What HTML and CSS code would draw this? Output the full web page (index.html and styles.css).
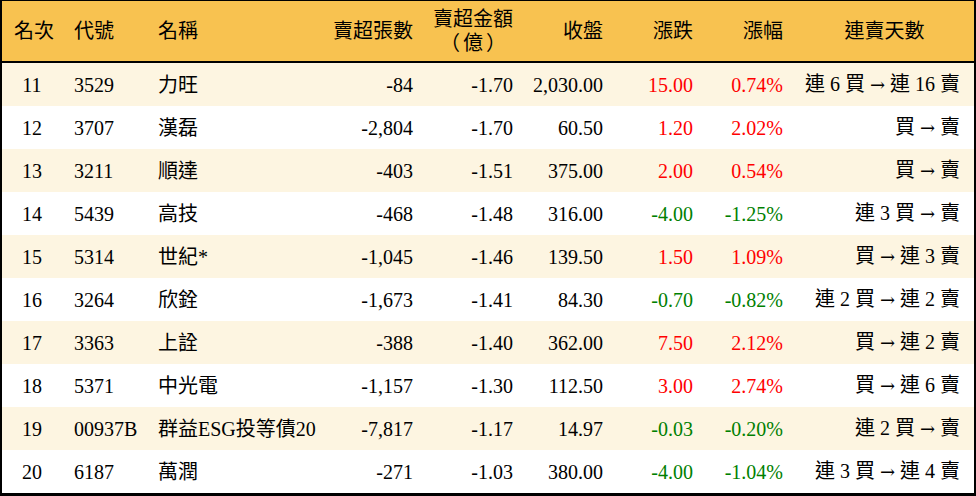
FILE: index.html
```html
<!DOCTYPE html>
<html lang="zh-Hant">
<head>
<meta charset="utf-8">
<link rel="stylesheet" href="styles.css">
</head>
<body>
<div class="frame">
<table class="rank">
<colgroup>
<col class="c1"><col class="c2"><col class="c3"><col class="c4"><col class="c5"><col class="c6"><col class="c7"><col class="c8"><col class="c9">
</colgroup>
<thead>
<tr>
<th class="ctr">名次</th>
<th class="lft">代號</th>
<th class="lft">名稱</th>
<th class="rgt">賣超張數</th>
<th class="rgt"><span class="two"><span>賣超金額</span><span class="paren">（億）</span></span></th>
<th class="rgt">收盤</th>
<th class="rgt">漲跌</th>
<th class="rgt">漲幅</th>
<th class="ctr">連賣天數</th>
</tr>
</thead>
<tbody>
<tr class="alt"><td class="ctr">11</td><td>3529</td><td>力旺</td><td class="rgt">-84</td><td class="rgt">-1.70</td><td class="rgt">2,030.00</td><td class="rgt up">15.00</td><td class="rgt up">0.74%</td><td class="rgt last">連 6 買 <span class="arr">→</span> 連 16 賣</td></tr>
<tr><td class="ctr">12</td><td>3707</td><td>漢磊</td><td class="rgt">-2,804</td><td class="rgt">-1.70</td><td class="rgt">60.50</td><td class="rgt up">1.20</td><td class="rgt up">2.02%</td><td class="rgt last">買 <span class="arr">→</span> 賣</td></tr>
<tr class="alt"><td class="ctr">13</td><td>3211</td><td>順達</td><td class="rgt">-403</td><td class="rgt">-1.51</td><td class="rgt">375.00</td><td class="rgt up">2.00</td><td class="rgt up">0.54%</td><td class="rgt last">買 <span class="arr">→</span> 賣</td></tr>
<tr><td class="ctr">14</td><td>5439</td><td>高技</td><td class="rgt">-468</td><td class="rgt">-1.48</td><td class="rgt">316.00</td><td class="rgt dn">-4.00</td><td class="rgt dn">-1.25%</td><td class="rgt last">連 3 買 <span class="arr">→</span> 賣</td></tr>
<tr class="alt"><td class="ctr">15</td><td>5314</td><td>世紀*</td><td class="rgt">-1,045</td><td class="rgt">-1.46</td><td class="rgt">139.50</td><td class="rgt up">1.50</td><td class="rgt up">1.09%</td><td class="rgt last">買 <span class="arr">→</span> 連 3 賣</td></tr>
<tr><td class="ctr">16</td><td>3264</td><td>欣銓</td><td class="rgt">-1,673</td><td class="rgt">-1.41</td><td class="rgt">84.30</td><td class="rgt dn">-0.70</td><td class="rgt dn">-0.82%</td><td class="rgt last">連 2 買 <span class="arr">→</span> 連 2 賣</td></tr>
<tr class="alt"><td class="ctr">17</td><td>3363</td><td>上詮</td><td class="rgt">-388</td><td class="rgt">-1.40</td><td class="rgt">362.00</td><td class="rgt up">7.50</td><td class="rgt up">2.12%</td><td class="rgt last">買 <span class="arr">→</span> 連 2 賣</td></tr>
<tr><td class="ctr">18</td><td>5371</td><td>中光電</td><td class="rgt">-1,157</td><td class="rgt">-1.30</td><td class="rgt">112.50</td><td class="rgt up">3.00</td><td class="rgt up">2.74%</td><td class="rgt last">買 <span class="arr">→</span> 連 6 賣</td></tr>
<tr class="alt"><td class="ctr">19</td><td>00937B</td><td>群益ESG投等債20</td><td class="rgt">-7,817</td><td class="rgt">-1.17</td><td class="rgt">14.97</td><td class="rgt dn">-0.03</td><td class="rgt dn">-0.20%</td><td class="rgt last">連 2 買 <span class="arr">→</span> 賣</td></tr>
<tr><td class="ctr">20</td><td>6187</td><td>萬潤</td><td class="rgt">-271</td><td class="rgt">-1.03</td><td class="rgt">380.00</td><td class="rgt dn">-4.00</td><td class="rgt dn">-1.04%</td><td class="rgt last">連 3 買 <span class="arr">→</span> 連 4 賣</td></tr>
</tbody>
</table>
</div>
</body>
</html>
```
FILE: styles.css
```css
html, body {
  margin: 0;
  padding: 0;
  background: #ffffff;
}
.frame {
  width: 976px;
  height: 496px;
  box-sizing: border-box;
  border-top: 1px solid #000;
  border-left: 2px solid #000;
  border-right: 2px solid #000;
  border-bottom: 3px solid #000;
  overflow: hidden;
}
.rank {
  width: 972px;
  table-layout: fixed;
  border-collapse: separate;
  border-spacing: 0;
  font-family: "Liberation Serif", "Noto Sans CJK TC", serif;
  font-size: 20px;
  color: #000;
}
.c1 { width: 60px; }
.c2 { width: 84px; }
.c3 { width: 165px; }
.c4 { width: 114px; }
.c5 { width: 100px; }
.c6 { width: 90px; }
.c7 { width: 90px; }
.c8 { width: 90px; }
.c9 { width: 179px; }
.rank th {
  box-sizing: border-box;
  height: 62px;
  background: #f8c250;
  border-bottom: 2px solid #000;
  font-weight: normal;
  padding: 0 12px;
  white-space: nowrap;
  line-height: 24px;
}
.rank td {
  box-sizing: border-box;
  height: 43px;
  padding: 0 12px;
  white-space: nowrap;
  line-height: 24px;
}
.rank td.rgt,
.rank th.rgt {
  padding-left: 2px;
}
.rank td.last {
  padding-right: 14px;
}
.rank tbody tr.alt td {
  background: #fdf5e1;
}
.lft { text-align: left; }
.rgt { text-align: right; }
.ctr { text-align: center; }
.two {
  display: inline-flex;
  flex-direction: column;
  align-items: center;
}
.paren {
  letter-spacing: 3px;
  margin-right: -3px;
}
.arr {
  font-family: "DejaVu Serif", serif;
  font-size: 18px;
}
.up { color: #ff0000; }
.dn { color: #008000; }
```
